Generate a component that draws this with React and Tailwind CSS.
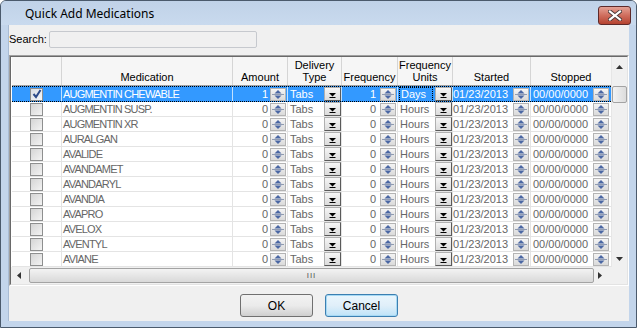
import React from "react";

const meds = [
  "AUGMENTIN CHEWABLE",
  "AUGMENTIN SUSP.",
  "AUGMENTIN XR",
  "AURALGAN",
  "AVALIDE",
  "AVANDAMET",
  "AVANDARYL",
  "AVANDIA",
  "AVAPRO",
  "AVELOX",
  "AVENTYL",
  "AVIANE",
];

// column widths, left to right
const W = { chk: "w-[50px]", med: "w-[171px]", amt: "w-[55px]", del: "w-[54px]", frq: "w-[56px]", unit: "w-[55px]", start: "w-[78px]", stop: "w-[80px]" };

const Spin = () => (
  <div className="w-[16px] h-[13px] shrink-0 border border-[#b4b4b4] bg-gradient-to-b from-[#f4f4f4] to-[#dadada] flex items-center justify-center">
    <svg width="12" height="11" viewBox="0 0 12 11">
      <path d="M6 1L9.5 4.5H2.5Z" fill="#4a67a3" />
      <path d="M0 5.5H12" stroke="#8f9bb2" strokeWidth="1" />
      <path d="M6 10L9.5 6.5H2.5Z" fill="#4a67a3" />
    </svg>
  </div>
);

const Drop = () => (
  <div className="w-[17px] h-[14px] shrink-0 border border-t-[#b0b0b0] border-l-[#b0b0b0] border-r-[#5a5a5a] border-b-[#5a5a5a] bg-gradient-to-b from-[#f6f6f6] to-[#dcdcdc] flex items-end justify-center pb-[2px]">
    <svg width="9" height="5" viewBox="0 0 9 5">
      <path d="M1 0H8L4.5 3.5Z" fill="#000" />
      <path d="M1.5 4.5H7.5" stroke="#000" strokeWidth="1" />
    </svg>
  </div>
);

const Check = ({ on }) => (
  <div className={`w-[13px] h-[13px] border border-[#8e8f8f] flex items-center justify-center ${on ? "bg-gradient-to-br from-[#d8dce4] to-[#f6f7f9]" : "bg-gradient-to-br from-[#d5d5d5] to-[#f3f3f3]"}`}>
    {on && (
      <svg width="10" height="10" viewBox="0 0 10 10">
        <path d="M1.5 5L4 8L8.5 1" fill="none" stroke="#2d4a8a" strokeWidth="2" />
      </svg>
    )}
  </div>
);

const Row = ({ name, sel }) => {
  const txt = sel ? "text-white" : "text-[#666]";
  const cell = sel ? "border-r border-white/70" : "border-r border-[#e4e4e4]";
  return (
    <div className={`flex h-[15px] ${sel ? "bg-[#3399ff] border-y border-dotted border-black h-[16px] -mt-px" : "bg-white border-b border-[#e4e4e4]"} ${txt}`}>
      <div className={`${W.chk} ${cell} flex items-center justify-center`}><Check on={sel} /></div>
      <div className={`${W.med} ${cell} flex items-center pl-[1px] text-[11px] tracking-[-0.8px] leading-none`}>{name}</div>
      <div className={`${W.amt} ${cell} flex items-center justify-end gap-[2px] pr-[1px]`}><span className="leading-none">{sel ? 1 : 0}</span><Spin /></div>
      <div className={`${W.del} ${cell} flex items-center justify-between pl-[2px]`}><span className="leading-none">Tabs</span><Drop /></div>
      <div className={`${W.frq} ${cell} flex items-center justify-end gap-[4px] pr-[1px]`}><span className="leading-none">{sel ? 1 : 0}</span><Spin /></div>
      <div className={`${W.unit} ${cell} flex items-center justify-between pl-px`}>
        {sel ? (
          <span className="leading-none border border-dotted border-black bg-[#3399ff] px-[1px] py-[1px] w-[34px]">Days</span>
        ) : (
          <span className="leading-none pl-px">Hours</span>
        )}
        <Drop />
      </div>
      <div className={`${W.start} ${cell} flex items-center justify-between pr-[1px]`}><span className="leading-none">01/23/2013</span><Spin /></div>
      <div className={`${W.stop} flex items-center justify-between pl-[2px] pr-[2px]`}><span className="leading-none">00/00/0000</span><Spin /></div>
    </div>
  );
};

const Head = ({ w, children, border = true }) => (
  <div className={`${w} ${border ? "border-r border-[#d5d5d5]" : ""} flex flex-col items-center justify-end pb-[2px] leading-[12px] text-black`}>{children}</div>
);

export default function App() {
  return (
    <div className="w-[637px] h-[328px] font-['Liberation_Sans',Arial,sans-serif] text-[11px] bg-[#c3d5eb] border border-[#4b5a6c] rounded-t-[6px] flex flex-col overflow-hidden">
      {/* title bar */}
      <div className="h-[24px] shrink-0 flex items-center justify-between pl-[24px] pr-[5px] bg-gradient-to-b from-[#c0d2e8] to-[#c9daee]">
        <span className="text-[12px] text-black font-['Noto_Sans',sans-serif] mt-[2px]">Quick Add Medications</span>
        <div className="w-[33px] h-[19px] mt-[4px] rounded-[3px] border border-[#5e2a2a] bg-gradient-to-b from-[#e3a195] via-[#cf6d5d] to-[#b5422f] flex items-center justify-center">
          <svg width="14" height="11" viewBox="0 0 14 11">
            <path d="M2 1.5L12 9.5M12 1.5L2 9.5" stroke="#4a3a3a" strokeWidth="4" strokeLinecap="square" />
            <path d="M2 1.5L12 9.5M12 1.5L2 9.5" stroke="#fff" strokeWidth="2.2" strokeLinecap="square" />
          </svg>
        </div>
      </div>

      {/* client */}
      <div className="flex-1 mx-[7px] mb-[6px] bg-[#f0f0f0] border-l border-[#a9bcd4] flex flex-col">
        <div className="flex items-center h-[24px] pt-[4px]">
          <span className="text-black">Search:</span>
          <div className="ml-[2px] w-[208px] h-[17px] border border-[#c6c9ce] rounded-[2px] bg-[#f0f0f0]" />
        </div>

        {/* grid */}
        <div className="mt-[6px] border-t border-l border-[#a0a0a0] border-b border-r border-b-white border-r-white">
          <div className="border-t border-l border-[#696969] border-b border-r border-b-[#e3e3e3] border-r-[#e3e3e3] bg-[#ababab] flex flex-col">
            <div className="flex">
              <div className="flex flex-col w-[600px] pl-px bg-white">
                <div className="flex h-[30px] bg-[#f6f6f6] border-b-2 border-[#a0a0a0]">
                  <Head w={W.chk} />
                  <Head w={W.med}>Medication</Head>
                  <Head w={W.amt}>Amount</Head>
                  <Head w={W.del}><span>Delivery</span><span>Type</span></Head>
                  <Head w={W.frq}>Frequency</Head>
                  <Head w={W.unit}><span>Frequency</span><span>Units</span></Head>
                  <Head w={W.start}>Started</Head>
                  <Head w={W.stop} border={false}>Stopped</Head>
                </div>
                {meds.map((m, i) => (
                  <Row key={m} name={m} sel={i === 0} />
                ))}
              </div>
              {/* vertical scrollbar */}
              <div className="w-[17px] bg-[#f0f0f0] border-l border-[#e6e6e6] flex flex-col items-center">
                <svg className="mt-[8px]" width="7" height="4" viewBox="0 0 7 4"><path d="M3.5 0L7 4H0Z" fill="#333" /></svg>
                <div className="mt-[17px] w-[15px] h-[17px] rounded-[2px] border border-[#a3a3a3] bg-gradient-to-r from-[#f3f3f3] to-[#dcdcdc]" />
                <div className="flex-1" />
                <svg className="mb-[6px]" width="7" height="4" viewBox="0 0 7 4"><path d="M0 0H7L3.5 4Z" fill="#333" /></svg>
              </div>
            </div>
            {/* horizontal scrollbar */}
            <div className="flex h-[17px] bg-[#f0f0f0]">
              <div className="w-[600px] flex items-center pl-[6px] pr-[8px]">
                <svg width="4" height="7" viewBox="0 0 4 7"><path d="M0 3.5L4 0V7Z" fill="#333" /></svg>
                <div className="ml-[8px] flex-1 h-[15px] rounded-[2px] border border-[#a3a3a3] bg-gradient-to-b from-[#f3f3f3] to-[#d9d9d9] flex items-center justify-center">
                  <span className="text-[8px] leading-none text-[#555] tracking-[1px]">III</span>
                </div>
                <svg className="ml-[4px]" width="4" height="7" viewBox="0 0 4 7"><path d="M4 3.5L0 0V7Z" fill="#333" /></svg>
              </div>
              <div className="w-[17px] bg-[#f0f0f0]" />
            </div>
          </div>
        </div>

        {/* buttons */}
        <div className="flex justify-center gap-[12px] mt-[8px]">
          <button className="w-[73px] h-[23px] rounded-[3px] border border-[#707070] bg-gradient-to-b from-[#f2f2f2] via-[#ebebeb] to-[#cfcfcf] text-black text-[12px]">OK</button>
          <button className="w-[73px] h-[23px] rounded-[3px] border border-[#3c7fb1] bg-gradient-to-b from-[#eaf6fd] via-[#e0eff9] to-[#bee3f8] text-black text-[12px] shadow-[inset_0_0_0_1px_#a6d9f4]">Cancel</button>
        </div>
      </div>
    </div>
  );
}
